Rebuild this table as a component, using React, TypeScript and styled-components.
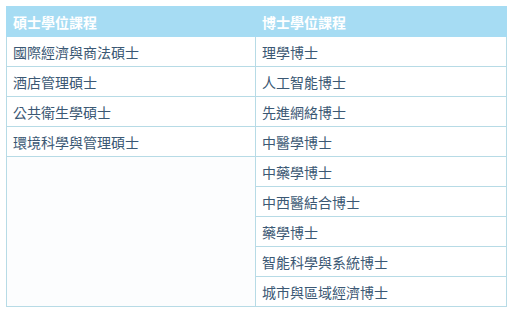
import { createGlobalStyle } from "styled-components"
import styled from "styled-components"

const GlobalStyle = createGlobalStyle`
  html, body {
    margin: 0;
    padding: 0;
    background: #fff;
  }

  body {
    font-family: "Noto Sans CJK TC", "Noto Sans", sans-serif;
  }
`

const Page = styled.div`
  padding: 6px 6px 0 6px;
`

const Table = styled.table`
  border-collapse: collapse;
  table-layout: fixed;
  width: 500px;
`

const HeadCell = styled.th`
  background: #a6dcf3;
  border: 1px solid #a6dcf3;
  color: #fff;
  font-size: 14px;
  font-weight: 700;
  height: 30px;
  padding: 0 6px;
  text-align: left;
  box-sizing: border-box;
`

const Cell = styled.td<{ empty?: boolean }>`
  background: ${(props) => (props.empty ? "#fcfdfe" : "#fff")};
  border: 1px solid #b7dbe6;
  color: #3b5874;
  font-size: 14px;
  height: 30px;
  padding: 0 6px;
  vertical-align: middle;
  box-sizing: border-box;
  white-space: nowrap;
`

const masters = ["國際經濟與商法碩士", "酒店管理碩士", "公共衛生學碩士", "環境科學與管理碩士"]

const doctors = [
  "理學博士",
  "人工智能博士",
  "先進網絡博士",
  "中醫學博士",
  "中藥學博士",
  "中西醫結合博士",
  "藥學博士",
  "智能科學與系統博士",
  "城市與區域經濟博士",
]

export default function App() {
  return (
    <Page>
      <GlobalStyle />
      <Table>
        <colgroup>
          <col style={{ width: 249 }} />
          <col style={{ width: 251 }} />
        </colgroup>
        <thead>
          <tr>
            <HeadCell>{"碩士學位課程"}</HeadCell>
            <HeadCell>{"博士學位課程"}</HeadCell>
          </tr>
        </thead>
        <tbody>
          {doctors.map((doctor, i) => (
            <tr key={doctor}>
              {i < masters.length && <Cell>{masters[i]}</Cell>}
              {i === masters.length && (
                <Cell empty rowSpan={doctors.length - masters.length} />
              )}
              <Cell>{doctor}</Cell>
            </tr>
          ))}
        </tbody>
      </Table>
    </Page>
  )
}
